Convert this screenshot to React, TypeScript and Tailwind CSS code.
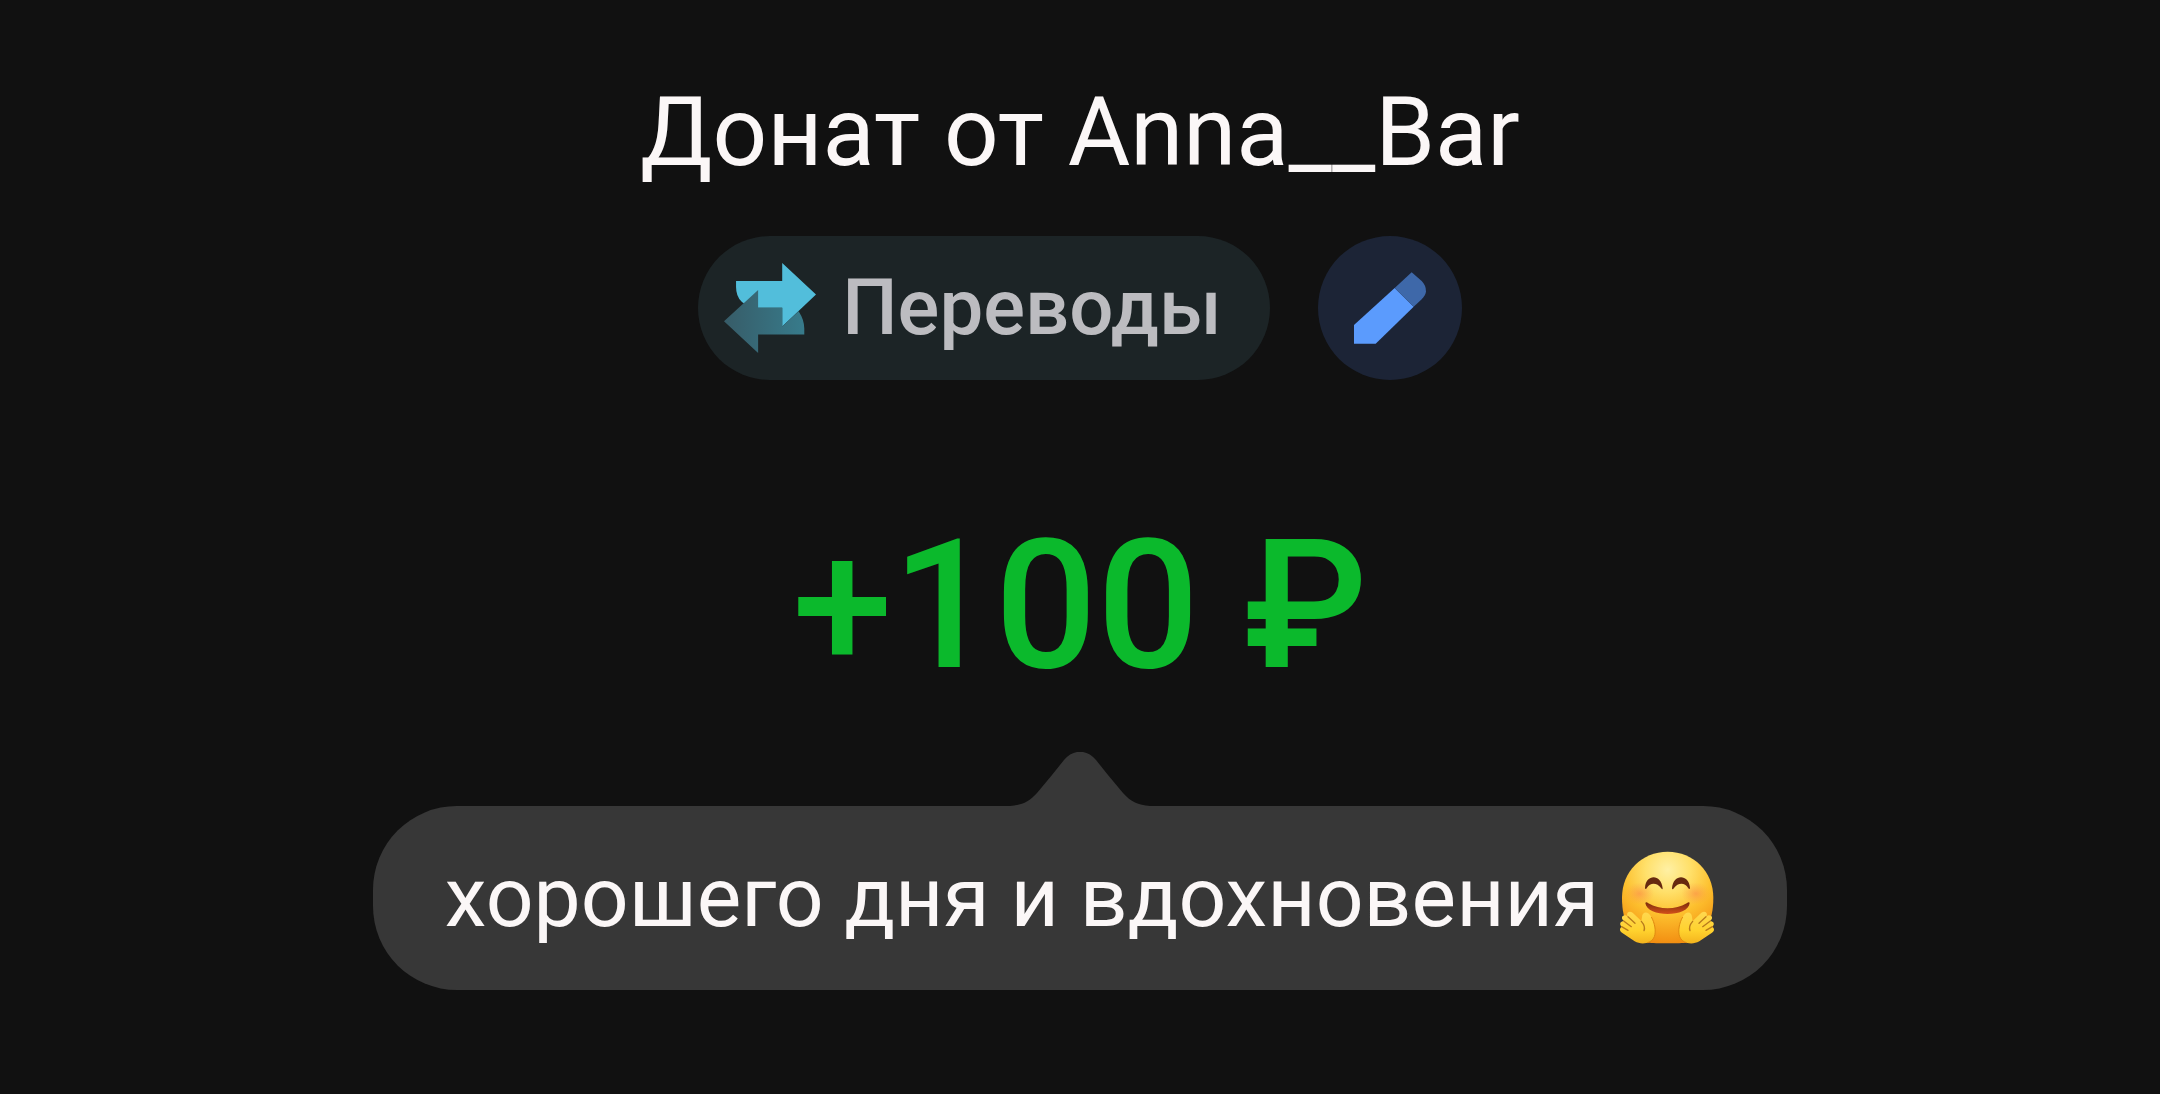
import React from "react";

const TransferIcon = () => (
  <svg viewBox="102 116 275 269" className="h-[90px] w-[92px] shrink-0" aria-hidden="true">
    <defs>
      <linearGradient id="back-arrow" gradientUnits="userSpaceOnUse" x1="102" y1="0" x2="342" y2="0">
        <stop offset="0" stopColor="#375c68" />
        <stop offset="1" stopColor="#377b8b" />
      </linearGradient>
    </defs>
    <path d="M138 170H276V116L377 210L276 306V250H204Q138 244 138 188Z" fill="#52bedb" />
    <path
      d="M204 197L102 290L204 385V330H342V312Q342 286 325 260L276 306V250H204Z"
      fill="url(#back-arrow)"
    />
  </svg>
);

const PencilIcon = () => (
  <svg viewBox="1123 143 216 214" className="h-[72px] w-[72px]" aria-hidden="true">
    <path d="M1245 190L1302 246L1188 357H1123V301Z" fill="#5b9bfd" />
    <path d="M1245 190L1296 143L1326 169Q1339 182 1339 200Q1338 213 1326 224L1302 246Z" fill="#3e68a9" />
  </svg>
);

const HugIcon = () => (
  <svg viewBox="58 64 286 282" className="h-[94px] w-[96px] shrink-0" role="img" aria-label="🤗">
    <defs>
      <radialGradient id="face" gradientUnits="userSpaceOnUse" cx="203" cy="120" r="225">
        <stop offset="0" stopColor="#fff0a4" />
        <stop offset="0.3" stopColor="#ffe06a" />
        <stop offset="0.6" stopColor="#fdc02e" />
        <stop offset="1" stopColor="#f28c10" />
      </radialGradient>
      <radialGradient id="cheek">
        <stop offset="0" stopColor="#fb8a4a" stopOpacity="0.6" />
        <stop offset="1" stopColor="#fb9a4a" stopOpacity="0" />
      </radialGradient>
      <linearGradient id="mouth" x1="0" y1="0" x2="0" y2="1">
        <stop offset="0" stopColor="#7a2c0c" />
        <stop offset="1" stopColor="#d4501a" />
      </linearGradient>
      <linearGradient id="hand" x1="0" y1="0" x2="0" y2="1">
        <stop offset="0" stopColor="#ffd850" />
        <stop offset="0.6" stopColor="#ffd22e" />
        <stop offset="1" stopColor="#f4b41e" />
      </linearGradient>
      <g id="palm">
        <path
          d="M154 262C144 243 127 245 126 262L124 274L98 249C87 241 77 250 83 260L76 257C64 257 63 267 71 273L68 275C58 278 59 287 66 291C58 294 58 304 66 309L104 335C126 347 155 341 163 321C169 305 164 279 154 262Z"
          fill="url(#hand)"
        />
        <path
          d="M84 261L105 281M71 274L94 291M65 291L84 302M124 275C132 284 136 293 132 303"
          fill="none"
          stroke="#b87a1c"
          strokeWidth="4"
          strokeLinecap="round"
        />
        <path
          d="M154 262C164 279 169 305 163 321C159 331 151 337 142 339"
          fill="none"
          stroke="#e08a10"
          strokeWidth="3"
        />
      </g>
    </defs>
    <path
      d="M203 66C281 66 340 126 340 204C340 276 314 327 262 339C240 341 166 341 144 339C92 327 66 276 66 204C66 126 125 66 203 66Z"
      fill="url(#face)"
    />
    <ellipse cx="118" cy="192" rx="44" ry="34" fill="url(#cheek)" />
    <ellipse cx="288" cy="192" rx="44" ry="34" fill="url(#cheek)" />
    <path
      d="M135 174C138 132 184 132 188 176C188 180 185 179 183 175C172 159 151 157 141 174C138 179 135 179 135 174Z"
      fill="#66290f"
    />
    <path
      d="M216 176C219 132 266 132 270 174C270 179 267 179 264 174C254 157 233 159 222 175C219 180 216 180 216 176Z"
      fill="#66290f"
    />
    <path
      d="M136 220C138 216 142 219 145 221C180 241 226 241 260 221C264 218 268 216 269 220C266 264 140 264 136 220Z"
      fill="url(#mouth)"
    />
    <use href="#palm" />
    <use href="#palm" transform="matrix(-1 0 0 1 402 0)" />
  </svg>
);

export default function App() {
  return (
    <main className="flex min-h-screen flex-col items-center bg-[#111111] px-8 pt-[76px] pb-24 font-['Roboto','Noto_Sans',sans-serif]">
      <h1 className="text-center text-8xl leading-[112px] text-[#fbf7f7]">Донат от Anna__Bar</h1>

      <div className="mt-12 flex items-center gap-12">
        <button
          type="button"
          className="flex h-36 items-center gap-[26px] rounded-full bg-[#1c2426] pr-12 pl-[26px] text-[78px] leading-none font-medium text-[#bcbcc0]"
        >
          <TransferIcon />
          Переводы
        </button>
        <button
          type="button"
          aria-label="Изменить"
          className="flex size-36 items-center justify-center rounded-full bg-[#1c2436]"
        >
          <PencilIcon />
        </button>
      </div>

      <p className="mt-[126px] text-center text-[180px] leading-[200px] font-medium text-[#0bb92c]">+100 ₽</p>

      {/* Message bubble with the tail pointing at the amount */}
      <div className="mt-[46px] flex flex-col items-center">
        <svg viewBox="0 0 140 54" className="h-[54px] w-[140px]" aria-hidden="true">
          <path
            d="M0 54C12 53 19 50 27 41L42 23L54 8C63 -3 77 -3 86 8L98 23L113 41C121 50 128 53 140 54Z"
            fill="#373737"
          />
        </svg>
        <div className="flex items-center gap-5 rounded-[84px] bg-[#373737] px-[72px] py-11">
          <p className="text-[84px] leading-24 text-[#fbf7f7]">хорошего дня и вдохновения</p>
          <HugIcon />
        </div>
      </div>
    </main>
  );
}
